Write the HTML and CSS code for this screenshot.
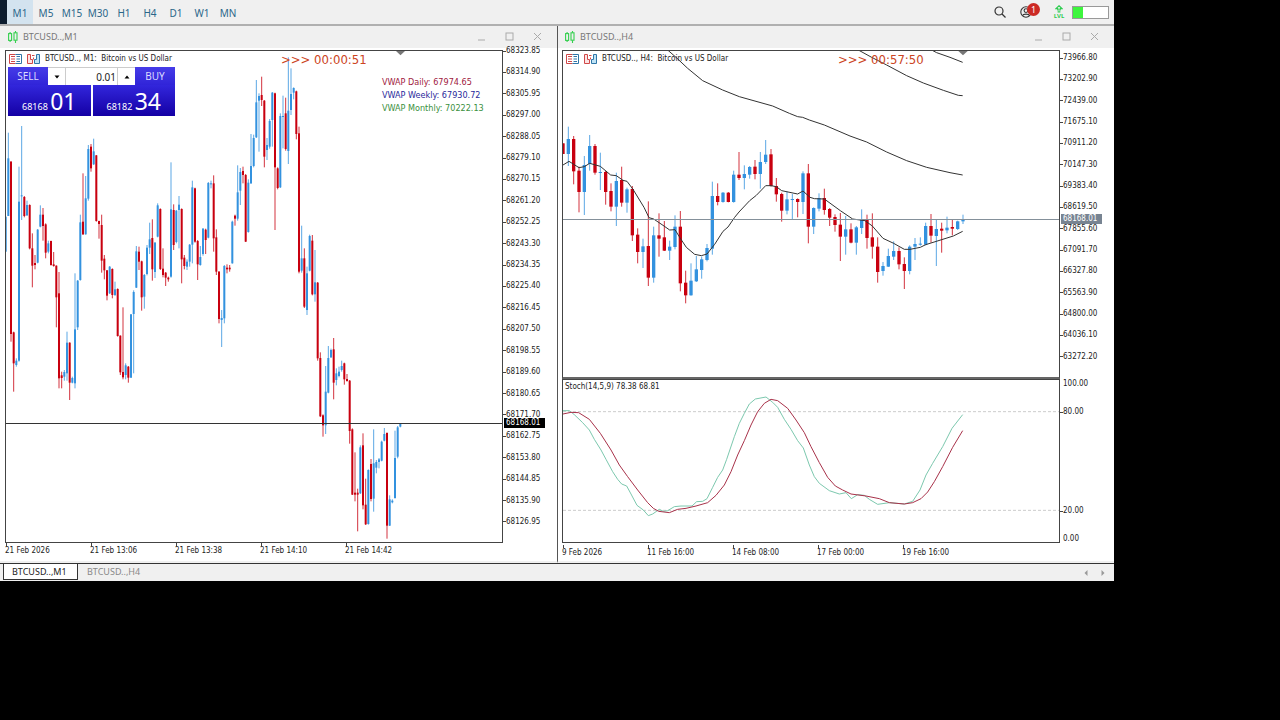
FILE: index.html
```html
<!DOCTYPE html>
<html lang="en">
<head>
    <meta charset="UTF-8">
    <meta name="viewport" content="width=device-width, initial-scale=1.0">
    <title>BTCUSD Charts</title>
    <link rel="stylesheet" href="styles.css">
</head>
<body>

<div class="app">
    <header class="toolbar">
        <nav class="timeframes">
            <button class="active">M1</button>
            <button>M5</button>
            <button>M15</button>
            <button>M30</button>
            <button>H1</button>
            <button>H4</button>
            <button>D1</button>
            <button>W1</button>
            <button>MN</button>
        </nav>
        <div class="status">
            <button class="icon-button" aria-label="Search">
                <svg width="12" height="12" viewBox="0 0 12 12"><circle cx="5" cy="5" r="4" fill="none" stroke="#333" stroke-width="1.2"/><path d="M8 8l3.500 3.500" stroke="#333" stroke-width="1.3"/></svg>
            </button>
            <button class="icon-button account" aria-label="Account">
                <svg width="12" height="12" viewBox="0 0 12 12" fill="none" stroke="#333" stroke-width="1.1"><circle cx="6" cy="6" r="5.2"/><circle cx="6" cy="4.6" r="1.9"/><path d="M2.5 9.6C3.2 7.6 8.8 7.6 9.5 9.6"/></svg>
                <span class="badge">1</span>
            </button>
            <div class="level">
                <svg width="8" height="8" viewBox="0 0 8 8" fill="none" stroke="#2ecc50" stroke-width="1.2"><path d="M4 0.8L7 3.6H5.2V5H2.8V3.6H1zM2.6 6.8h2.8"/></svg>
                <span>LVL</span>
            </div>
            <div class="gauge"><div class="gauge-fill"></div></div>
        </div>
    </header>

    <main class="windows">
        <section class="window">
            <div class="title-bar">
                <svg class="chart-icon" width="10" height="12" viewBox="0 0 10 12" fill="none" stroke="#35cf4f" stroke-width="1.1"><rect x="0.6" y="2.6" width="3" height="6.8"/><rect x="6" y="1.8" width="3" height="7.4"/><path d="M2.1 1v1.6M2.1 9.4V11M7.5 0v1.8M7.5 9.2V12"/></svg>
                <h2>BTCUSD..,M1</h2>
                <button aria-label="Minimize"><svg width="9" height="9" viewBox="0 0 9 9"><path d="M1 8h7"/></svg></button>
                <button aria-label="Maximize"><svg width="9" height="9" viewBox="0 0 9 9"><rect x="1" y="1" width="7" height="7"/></svg></button>
                <button aria-label="Close"><svg width="9" height="9" viewBox="0 0 9 9"><path d="M1 1l7 7M8 1l-7 7"/></svg></button>
            </div>
            <div class="chart">
                <div class="plot plot-full">
                    <svg class="drawing" height="491" viewBox="0 3 1488 1473" preserveAspectRatio="xMinYMin meet">
                        <path d="M1170 3h27l-13.500 13z" fill="#777"/>
                        <g id="candles-m1"></g>
                    </svg>
                    <div class="price-line" style="top: 372px"></div>
                    <div class="chart-header">
                        <svg width="13" height="10" viewBox="0 0 13 10" fill="none"><path d="M6.500 .5H.5v9h6M2 2.500h4M2 5h4M2 7.500h4" stroke="#d04848"/><path d="M6.500 .5h6v9h-6M7.500 2.500H11M7.500 5H11M7.500 7.500H11" stroke="#2f76a8"/></svg>
                        <svg width="13" height="10" viewBox="0 0 13 10"><path d="M3.500 .5h-3v9h5v-4h-2zM5 1.500h2.500M6.500 3.500v2" fill="#fbe4e4" stroke="#d04848"/><path d="M9.500 .5h3v9h-5v-4h2z" fill="#bfe3f5" stroke="#2f76a8"/></svg>
                        <span>BTCUSD.., M1:&nbsp; Bitcoin vs US Dollar</span>
                    </div>
                    <div class="trade-panel">
                        <div class="trade-row">
                            <button class="side">SELL</button>
                            <button class="step" aria-label="Decrease volume"><svg width="6" height="4" viewBox="0 0 6 4"><path d="M0.500 .5h5L3 3.500z"/></svg></button>
                            <input type="text" value="0.01" aria-label="Volume">
                            <button class="step" aria-label="Increase volume"><svg width="6" height="4" viewBox="0 0 6 4"><path d="M0.500 3.500h5L3 .5z"/></svg></button>
                            <button class="side">BUY</button>
                        </div>
                        <div class="trade-row prices">
                            <button class="price">68168 <b>01</b></button>
                            <button class="price">68182 <b>34</b></button>
                        </div>
                    </div>
                    <div class="countdown">&gt;&gt;&gt; 00:00:51</div>
                    <ul class="vwap">
                        <li class="daily">VWAP Daily: 67974.65</li>
                        <li class="weekly">VWAP Weekly: 67930.72</li>
                        <li class="monthly">VWAP Monthly: 70222.13</li>
                    </ul>
                </div>
                <div class="axis">
                    <div class="scale scale-m1">
                        <span>68323.85</span>
                        <span>68314.90</span>
                        <span>68305.95</span>
                        <span>68297.00</span>
                        <span>68288.05</span>
                        <span>68279.10</span>
                        <span>68270.15</span>
                        <span>68261.20</span>
                        <span>68252.25</span>
                        <span>68243.30</span>
                        <span>68234.35</span>
                        <span>68225.40</span>
                        <span>68216.45</span>
                        <span>68207.50</span>
                        <span>68198.55</span>
                        <span>68189.60</span>
                        <span>68180.65</span>
                        <span>68171.70</span>
                        <span>68162.75</span>
                        <span>68153.80</span>
                        <span>68144.85</span>
                        <span>68135.90</span>
                        <span>68126.95</span>
                    </div>
                    <div class="current" style="top: 373px">68168.01</div>
                </div>
            </div>
            <div class="times">
                <span>21 Feb 2026</span>
                <span>21 Feb 13:06</span>
                <span>21 Feb 13:38</span>
                <span>21 Feb 14:10</span>
                <span>21 Feb 14:42</span>
            </div>
        </section>

        <section class="window second">
            <div class="title-bar">
                <svg class="chart-icon" width="10" height="12" viewBox="0 0 10 12" fill="none" stroke="#35cf4f" stroke-width="1.1"><rect x="0.6" y="2.6" width="3" height="6.8"/><rect x="6" y="1.8" width="3" height="7.4"/><path d="M2.1 1v1.6M2.1 9.4V11M7.5 0v1.8M7.5 9.2V12"/></svg>
                <h2>BTCUSD..,H4</h2>
                <button aria-label="Minimize"><svg width="9" height="9" viewBox="0 0 9 9"><path d="M1 8h7"/></svg></button>
                <button aria-label="Maximize"><svg width="9" height="9" viewBox="0 0 9 9"><rect x="1" y="1" width="7" height="7"/></svg></button>
                <button aria-label="Close"><svg width="9" height="9" viewBox="0 0 9 9"><path d="M1 1l7 7M8 1l-7 7"/></svg></button>
            </div>
            <div class="chart">
                <div class="plots">
                    <div class="plot plot-price">
                        <svg class="drawing" height="326" viewBox="0 3 1488 978" preserveAspectRatio="xMinYMin meet">
                            <path d="M1186 3h28l-14 13z" fill="#777"/>
                            <g id="candles-h4"></g>
                            <g class="average">
                                <polyline points="0,345 18,334 48,353 64,350 80,340 112,349 143,375 160,377 180,391 192,394 210,418 243,472 258,503 272,507 300,526 320,540 336,539 352,565 370,592 395,613 415,617 432,612 455,583 480,544 495,531 515,502 528,486 560,452 580,436 608,407 624,407 640,410 656,422 704,432 720,423 741,442 754,446 784,447 832,482 869,507 906,512 928,528 960,565 992,580 1024,598 1041,598 1072,592 1088,584 1104,579 1171,558 1199,544"/>
                                <polyline points="314,0 339,22 374,55 419,92 479,120 529,140 579,154 629,168 679,190 704,200 719,202 739,210 784,225 861,258 911,276 971,306 1031,332 1091,352 1161,368 1199,375"/>
                                <polyline points="886,0 926,22 971,45 1031,77 1081,99 1141,121 1186,136 1199,137"/>
                                <polyline points="1106,0 1121,8 1161,22 1199,37"/>
                            </g>
                        </svg>
                        <div class="price-line" style="top: 168px"></div>
                        <div class="chart-header">
                            <svg width="13" height="10" viewBox="0 0 13 10" fill="none"><path d="M6.500 .5H.5v9h6M2 2.500h4M2 5h4M2 7.500h4" stroke="#d04848"/><path d="M6.500 .5h6v9h-6M7.500 2.500H11M7.500 5H11M7.500 7.500H11" stroke="#2f76a8"/></svg>
                            <svg width="13" height="10" viewBox="0 0 13 10"><path d="M3.500 .5h-3v9h5v-4h-2zM5 1.500h2.500M6.500 3.500v2" fill="#fbe4e4" stroke="#d04848"/><path d="M9.500 .5h3v9h-5v-4h2z" fill="#bfe3f5" stroke="#2f76a8"/></svg>
                            <span>BTCUSD.., H4:&nbsp; Bitcoin vs US Dollar</span>
                        </div>
                        <div class="countdown">&gt;&gt;&gt; 00:57:50</div>
                    </div>
                    <div class="plot plot-stoch">
                        <svg class="drawing" height="162" viewBox="21 30 1488 486" preserveAspectRatio="xMinYMin meet">
                            <path class="level-line" d="M21 125H4000M21 421H4000"/>
                            <polyline class="stoch-main" points="21,122 40,122 55,134 80,158 100,180 115,208 135,240 150,268 170,305 185,328 197,342 212,348 225,372 243,406 262,420 277,437 290,432 310,418 322,424 335,422 355,410 375,408 408,408 422,395 440,394 453,386 470,352 485,322 500,300 512,268 535,200 550,160 565,130 580,102 598,87 630,81 650,97 665,112 685,148 705,178 725,212 742,234 760,285 775,320 790,340 820,362 850,372 870,368 886,386 905,374 925,376 940,388 965,403 1000,398 1045,402 1070,394 1092,360 1110,315 1130,280 1160,230 1188,175 1220,134"/>
                            <polyline class="stoch-signal" points="21,132 45,127 68,128 100,148 133,190 165,240 190,285 215,320 245,360 275,398 292,415 308,424 340,428 365,418 390,415 420,408 455,398 480,376 505,345 525,305 545,255 565,212 585,165 605,125 625,100 645,88 665,92 695,115 720,150 745,188 765,230 790,278 815,322 838,348 860,360 885,372 930,378 970,386 1000,398 1045,402 1070,398 1095,386 1115,366 1135,335 1160,290 1190,232 1220,182"/>
                        </svg>
                        <div class="stoch-label">Stoch(14,5,9) 78.38 68.81</div>
                    </div>
                </div>
                <div class="axis">
                    <div class="scale scale-h4">
                        <span>73966.80</span>
                        <span>73202.90</span>
                        <span>72439.00</span>
                        <span>71675.10</span>
                        <span>70911.20</span>
                        <span>70147.30</span>
                        <span>69383.40</span>
                        <span>68619.50</span>
                        <span>67855.60</span>
                        <span>67091.70</span>
                        <span>66327.80</span>
                        <span>65563.90</span>
                        <span>64800.00</span>
                        <span>64036.10</span>
                        <span>63272.20</span>
                    </div>
                    <div class="scale scale-stoch">
                        <span class="limit">100.00</span>
                        <span>80.00</span>
                        <span class="lower">20.00</span>
                        <span class="limit">0.00</span>
                    </div>
                    <div class="current" style="top: 169px">68168.01</div>
                </div>
            </div>
            <div class="times">
                <span>9 Feb 2026</span>
                <span>11 Feb 16:00</span>
                <span>14 Feb 08:00</span>
                <span>17 Feb 00:00</span>
                <span>19 Feb 16:00</span>
            </div>
        </section>
    </main>

    <footer class="tabs">
        <button class="tab active">BTCUSD..,M1</button>
        <button class="tab">BTCUSD..,H4</button>
        <div class="scroll">
            <button aria-label="Scroll left"><svg width="4" height="6" viewBox="0 0 4 6"><path d="M3.500 0v6L.5 3z"/></svg></button>
            <button aria-label="Scroll right"><svg width="4" height="6" viewBox="0 0 4 6"><path d="M.5 0v6l3-3z"/></svg></button>
        </div>
    </footer>
</div>

<script src="charts.js"></script>

</body>
</html>
```

FILE: styles.css
```css
* {
    box-sizing: border-box;
}
body {
    margin: 0;
    background-color: #000;
    font-family: "Noto Sans", "Open Sans", sans-serif;
    font-size: 10px;
    color: #222;
}
button {
    padding: 0;
    border: none;
    background: none;
    font: inherit;
    color: inherit;
    cursor: pointer;
}
svg {
    display: block;
}
.app {
    margin-right: 166px;
    background-color: #f0f0f0;
}

/* toolbar */
.toolbar {
    display: flex;
    justify-content: space-between;
    height: 26px;
    border-bottom: 2px solid #b0b0b0;
}
.timeframes {
    display: flex;
    border-left: 7px solid #0c1c2e;
}
.timeframes button {
    width: 26px;
    padding-top: 2px;
    color: #2b6689;
}
.timeframes .active {
    background-color: #d3e3ef;
}
.status {
    display: flex;
    align-items: center;
    padding-right: 5px;
}
.icon-button {
    margin-right: 14px;
}
.account {
    position: relative;
    margin-right: 20px;
}
.badge {
    position: absolute;
    left: 7px;
    top: -3px;
    width: 13px;
    height: 13px;
    border-radius: 50%;
    background-color: #cc2a25;
    color: #fff;
    font-size: 9px;
    line-height: 13px;
}
.level {
    display: flex;
    flex-direction: column;
    align-items: center;
    width: 14px;
    margin-right: 6px;
    font-size: 6px;
    font-weight: bold;
    line-height: 7px;
    color: #2ecc50;
}
.gauge {
    width: 37px;
    height: 13px;
    border: 1px solid #999;
    background-color: #fff;
}
.gauge-fill {
    width: 28%;
    height: 100%;
    background-color: #3df53d;
}

/* chart windows */
.windows {
    display: flex;
    border-bottom: 1px solid #333;
}
.window {
    flex: 1;
    min-width: 0;
    padding: 0 4px 0 5px;
    border-bottom: 2px solid #f0f0f0;
    background: linear-gradient(#f0f0f0 22px, #fff 22px);
}
.second {
    padding-left: 4px;
    border-left: 1px solid #555;
}
.title-bar {
    display: flex;
    align-items: center;
    height: 19px;
    padding: 2px 11px 0 3px;
}
.title-bar h2 {
    flex: 1;
    margin: 0 0 0 5px;
    font-size: 9px;
    font-weight: normal;
    color: #777;
}
.title-bar button {
    margin-left: 19px;
}
.title-bar button svg {
    fill: none;
    stroke: #aaa;
}
.chart {
    display: flex;
}
.plots {
    flex: 1;
    min-width: 0;
}
.plot {
    position: relative;
    flex: 1;
    min-width: 0;
    margin-top: 5px;
    border: 1px solid #444;
    overflow: hidden;
    background-color: #fff;
}
.plot-price {
    border-bottom: 2px solid #666;
}
.plot-stoch {
    margin-top: 0;
}
.drawing {
    width: 100%;
}
.up {
    fill: #3392df;
}
.down {
    fill: #c8000f;
}
.wick {
    opacity: 0.8;
}
.average polyline {
    fill: none;
    stroke: #333;
    stroke-width: 3;
}
.level-line {
    stroke: #ccc;
    stroke-width: 3;
    stroke-dasharray: 9 6;
}
.stoch-main,
.stoch-signal {
    fill: none;
    stroke: #7cc8ae;
    stroke-width: 3;
}
.stoch-signal {
    stroke: #a8324a;
}
.price-line {
    position: absolute;
    left: 0;
    right: 0;
    height: 1px;
    background-color: #333;
}
.second .price-line {
    background-color: #84909a;
}

/* text over the charts */
.chart-header,
.stoch-label,
.axis,
.times {
    font-family: "DejaVu Sans Condensed", "DejaVu Sans", sans-serif;
    font-size: 8px;
    line-height: 12px;
}
.chart-header {
    position: absolute;
    left: 3px;
    top: 2px;
    display: flex;
    align-items: center;
    gap: 5px;
}
.stoch-label {
    position: absolute;
    left: 2px;
    top: 1px;
}
.countdown {
    position: absolute;
    left: 275px;
    top: 0;
    font-family: "DejaVu Sans Condensed", "DejaVu Sans", sans-serif;
    font-size: 13px;
    line-height: 18px;
    color: #cc4422;
}
.vwap {
    position: absolute;
    left: 376px;
    top: 25px;
    margin: 0;
    padding: 0;
    list-style: none;
    font-family: "DejaVu Sans Condensed", "DejaVu Sans", sans-serif;
    font-size: 9px;
    line-height: 13px;
}
.daily {
    color: #a02040;
}
.weekly {
    color: #28289a;
}
.monthly {
    color: #3a9040;
}

/* one click trading */
.trade-panel {
    position: absolute;
    left: 2px;
    top: 16px;
    width: 167px;
    background-color: #fff;
}
.trade-row {
    display: flex;
    height: 18px;
}
.trade-row .side {
    width: 40px;
    background: linear-gradient(#463ce8, #3024d8);
    color: #dcdcff;
}
.step {
    display: flex;
    align-items: center;
    justify-content: center;
    width: 17px;
    border-top: 1px solid #ccc;
}
.trade-row input {
    flex: 1;
    min-width: 0;
    padding: 0 1px;
    border: 1px solid #ccc;
    border-width: 1px 1px 0 1px;
    font: inherit;
    text-align: right;
    color: #222;
}
.trade-row.prices {
    gap: 2px;
    height: 31px;
}
.price {
    flex: 1;
    padding-top: 2px;
    background: linear-gradient(#3226dc, #1400a4);
    color: #fff;
    font-size: 9px;
    line-height: 28px;
}
.price b {
    font-size: 23px;
    font-weight: normal;
}

/* axes */
.axis {
    position: relative;
    width: 50px;
}
.scale {
    display: flex;
    flex-direction: column;
    justify-content: space-between;
}
.scale span {
    display: flex;
    align-items: center;
}
.scale span::before {
    content: "";
    width: 3px;
    height: 1px;
    background-color: #444;
}
.scale .limit::before {
    background: none;
}
.scale-m1 {
    height: 483px;
}
.scale-h4 {
    height: 311px;
    margin-top: 7px;
}
.scale-stoch {
    margin-top: 15px;
    gap: 16px;
}
.scale-stoch .lower {
    margin-top: 71px;
}
.current {
    position: absolute;
    left: 1px;
    width: 41px;
    padding-left: 2px;
    background-color: #000;
    line-height: 10px;
    color: #fff;
}
.second .current {
    background-color: #788492;
}
.times {
    display: flex;
    height: 16px;
}
.times span {
    width: 85px;
    padding-top: 2px;
    white-space: nowrap;
    background: linear-gradient(#444, #444) 1px 0 / 1px 3px no-repeat;
}

/* bottom tabs */
.tabs {
    display: flex;
    height: 17px;
    padding-left: 3px;
    font-size: 9px;
}
.tab {
    height: 16px;
    padding: 0 8px;
    border: 1px solid transparent;
    border-top: none;
    color: #888;
}
.tab.active {
    width: 75px;
    border-color: #333;
    background-color: #fff;
    text-align: left;
    color: #222;
}
.scroll {
    display: flex;
    gap: 13px;
    margin-left: auto;
    padding-right: 9px;
    fill: #999;
}
```

FILE: charts.js
```js
// each candle: direction, high, body top, body bottom, low (3 units per pixel)
const m1 = `
u 500 500 605 605|u 248 325 498 498|d 333 335 852 875|d 845 847 940 1025|u 925 932 945 950
u 350 455 932 935|u 228 436 439 510|d 438 441 498 502|u 452 465 496 498|d 463 465 595 598
d 550 595 647 712|d 615 639 645 658|u 537 539 638 640|u 466 494 530 532|d 474 494 528 572
d 520 523 608 625|u 572 580 605 610|d 572 573 645 647|d 606 643 648 650|d 646 647 742 832
d 666 730 985 1015|d 965 976 984 1015|u 960 966 980 992|u 845 878 970 992|d 877 878 998 1050
u 980 984 998 1000|u 670 838 1000 1015|u 690 692 832 840|u 494 517 690 692|d 370 515 553 555
u 378 445 553 554|u 285 297 446 452|d 282 290 355 365|u 266 304 343 345|d 315 316 513 515
d 512 513 522 566|d 494 525 632 668|d 615 626 661 688|d 660 661 737 751|u 648 650 730 732
d 655 657 735 745|u 695 718 735 738|d 715 717 858 860|d 856 857 967 975|d 772 966 982 988
u 940 946 975 988|d 948 950 983 998|u 792 793 983 984|u 721 726 792 970|u 588 604 713 714
d 590 605 635 660|d 632 634 742 782|u 672 675 740 776|u 585 593 672 676|u 518 568 593 612
d 508 564 658 692|u 576 578 666 684|u 460 466 560 562|d 475 477 657 660|d 595 656 675 682
d 666 668 683 708|d 680 683 688 695|u 337 478 680 683|d 463 480 585 600|u 480 482 576 580
u 438 464 480 595|d 475 477 628 700|d 615 623 648 658|u 628 635 650 660|u 582 584 635 650
u 392 412 584 640|d 413 415 575 578|d 570 573 643 690|u 588 621 645 647|u 534 536 612 617
d 536 539 570 612|u 396 399 563 565|u 392 400 402 415|d 376 400 565 605|d 538 562 665 675
d 663 665 807 820|u 780 804 810 891|u 645 648 805 820|d 643 653 658 670|d 645 653 658 665
u 512 515 640 641|d 494 497 506 527|u 346 427 506 512|u 354 366 422 465|d 350 363 375 400
d 372 375 575 576|u 388 398 546 548|u 252 348 400 402|u 254 264 348 352|u 90 157 262 264
u 130 138 152 305|d 80 135 150 168|d 150 152 320 352|u 264 285 300 330|u 207 213 290 296
u 126 128 210 290|d 128 130 352 540|d 352 355 414 418|u 190 198 412 414|u 137 198 200 295
d 143 190 297 302|u 22 182 303 342|u 55 132 180 195|u 112 114 128 148|d 122 124 252 268
d 230 250 665 670|u 527 625 662 668|d 595 625 770 774|u 650 670 780 795|u 554 558 662 664
d 555 572 733 736|u 600 697 733 755|d 696 698 925 932|d 907 924 1099 1101|d 1093 1096 1126 1160
u 948 1025 1126 1152|u 888 924 1028 1030|u 896 900 922 924|d 864 898 998 1048|u 955 970 990 1006
u 950 965 978 982|u 932 948 960 965|d 938 940 988 1004|d 972 987 993 995|d 990 992 1143 1181
d 1135 1138 1334 1335|d 1207 1328 1334 1354|d 1316 1328 1334 1444|u 1186 1192 1330 1332|d 1150 1186 1366 1378
d 1286 1364 1423 1425|u 1258 1260 1422 1424|d 1227 1242 1347 1354|u 1138 1240 1346 1385|u 1230 1236 1253 1270
u 1224 1228 1236 1255|u 1172 1175 1232 1234|u 1134 1152 1172 1174|d 1147 1149 1427 1466|u 1336 1348 1427 1428
u 1348 1352 1357 1360|u 1142 1224 1344 1346|u 1128 1132 1220 1225|u 1120 1122 1130 1132`;

const h4 = `
d 280 280 312 312|u 230 267 312 348|d 258 267 364 403|d 350 362 426 487|u 318 345 426 495
u 255 288 342 362|d 282 288 368 374|u 308 366 368 420|d 362 366 426 464|d 400 423 470 484
u 368 393 470 528|d 350 390 458 470|u 413 418 458 488|d 408 417 556 573|d 535 554 606 640
u 566 589 606 654|d 454 588 683 708|u 530 556 683 698|d 490 556 566 620|d 513 562 602 603
u 572 590 602 630|u 496 530 591 598|d 483 530 700 724|d 662 698 736 760|u 640 692 736 737
u 618 658 694 696|u 620 628 660 686|u 582 594 630 634|u 395 438 596 614|d 400 438 456 466
u 426 428 456 458|d 426 428 456 457|u 362 374 456 458|d 306 374 384 390|u 346 372 384 418
u 348 351 374 386|d 330 350 372 388|u 306 336 372 416|u 270 314 336 342|d 297 313 408 410
d 384 408 433 455|d 428 432 482 515|u 425 448 482 493|u 432 447 449 510|d 445 447 456 502
u 364 370 456 492|d 342 370 530 580|u 472 474 530 552|u 430 444 476 484|d 416 444 480 494
d 474 477 503 528|d 493 501 525 545|d 489 524 560 633|u 498 538 560 614|d 520 538 578 580
u 528 532 578 614|u 478 509 534 552|d 494 509 564 596|d 490 562 590 626|d 562 590 666 698
u 636 648 663 677|u 596 618 650 651|u 574 603 620 630|d 592 603 643 658|d 622 642 663 717
u 586 590 663 673|u 564 582 590 630|u 562 581 584 587|u 518 528 584 586|d 492 528 557 578
u 510 537 558 648|d 518 536 542 608|u 500 533 541 550|d 508 531 536 556|u 512 514 537 540
u 494 509 514 522`;

function bar(x, y, width, height, className) {
    const rect = document.createElementNS('http://www.w3.org/2000/svg', 'rect');
    rect.setAttribute('x', x);
    rect.setAttribute('y', y);
    rect.setAttribute('width', width);
    rect.setAttribute('height', height);
    rect.setAttribute('class', className);
    return rect;
}

function drawCandles(id, data, start, step, width) {
    const group = document.getElementById(id);
    data.trim().split(/[|\n]/).forEach((row, i) => {
        const [dir, ...values] = row.split(' ');
        const [high, top, bottom, low] = values.map(Number);
        const color = dir === 'u' ? 'up' : 'down';
        const x = start + i * step;
        group.append(
            bar(x - 1.5, high, 3, low - high, color + ' wick'),
            bar(x - width / 2, top, width, Math.max(bottom - top, 3), color)
        );
    });
}

drawCandles('candles-m1', m1, -1, 8, 6);
drawCandles('candles-h4', h4, 0, 16, 10);
```
